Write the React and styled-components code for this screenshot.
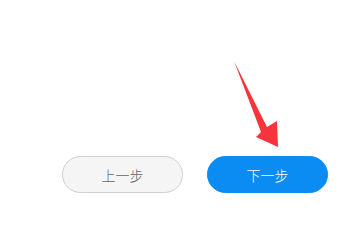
import React from "react";
import styled, { createGlobalStyle } from "styled-components";

const Global = createGlobalStyle`
  html, body { margin: 0; padding: 0; background: #fff; }
  body { font-family: "Noto Sans CJK SC", "Noto Sans", sans-serif; }
`;

const Page = styled.div`
  position: relative;
  width: 347px;
  height: 201px;
  overflow: hidden;
  display: flex;
  flex-direction: column;
  justify-content: flex-start;
  padding-top: 156px;
  box-sizing: border-box;
`;

const Row = styled.div`
  display: flex;
  gap: 24px;
  padding-left: 62px;
`;

const Button = styled.button`
  width: 121px;
  height: 37px;
  border-radius: 19px;
  box-sizing: border-box;
  font-family: "Noto Sans CJK SC", sans-serif;
  font-size: 14px;
  font-weight: 300;
  display: flex;
  align-items: center;
  justify-content: center;
  padding: 0;
  cursor: pointer;
  border: 1px solid ${(p) => (p.$primary ? "#0a8cf2" : "#cfcfcf")};
  background: ${(p) => (p.$primary ? "#0a8cf2" : "#f5f5f5")};
  color: ${(p) => (p.$primary ? "#ffffff" : "#666666")};
`;

const Arrow = styled.svg`
  position: absolute;
  left: 0;
  top: 0;
  pointer-events: none;
`;

export default function App() {
  return (
    <>
      <Global />
      <Page>
        <Row>
          <Button>上一步</Button>
          <Button $primary>下一步</Button>
        </Row>
        <Arrow width="347" height="201" viewBox="0 0 347 201">
          <polygon
            points="234,61 267,127 277,121 278,147 256,137 261,132"
            fill="#f7343c"
          />
        </Arrow>
      </Page>
    </>
  );
}
